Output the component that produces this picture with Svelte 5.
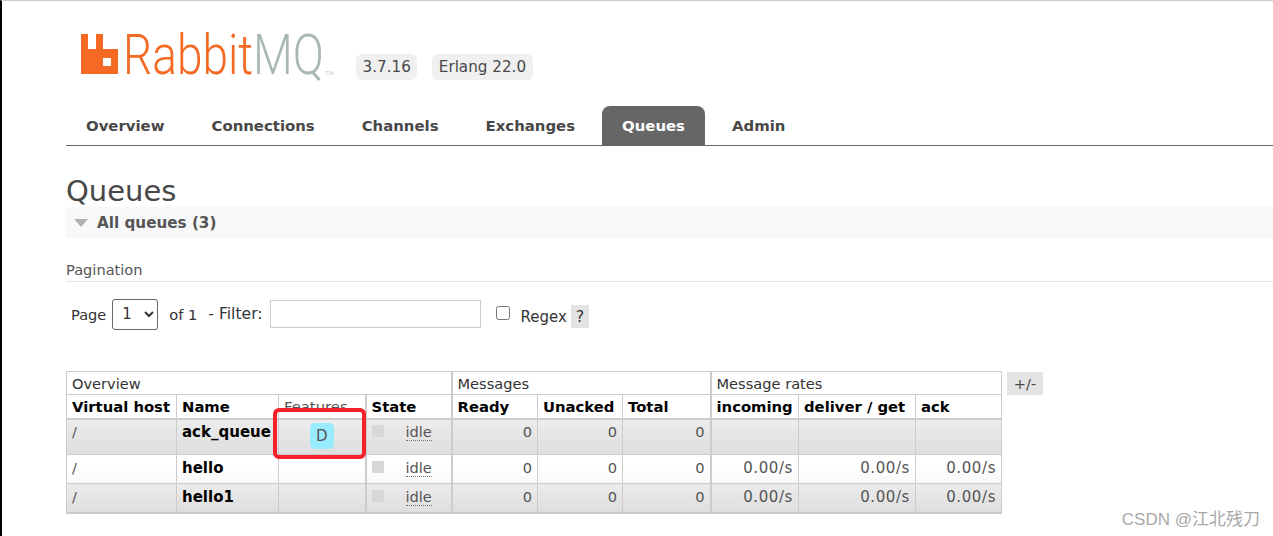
<script lang="ts">
  const NAV = ['Overview', 'Connections', 'Channels', 'Exchanges', 'Queues', 'Admin'];
  const ACTIVE = 'Queues';

  const QUEUES = [
    { name: 'ack_queue', durable: true, rates: ['', '', ''], tall: true },
    { name: 'hello', durable: false, rates: ['0.00/s', '0.00/s', '0.00/s'], tall: false },
    { name: 'hello1', durable: false, rates: ['0.00/s', '0.00/s', '0.00/s'], tall: false },
  ];
</script>

<div class="page">
  <header class="top">
    <svg class="logo" viewBox="0 0 270 56" width="270" height="56" aria-label="RabbitMQ">
      <path
        fill="#f46a25"
        fill-rule="evenodd"
        d="M1 7H8V22H16V7H23V22H38V47H1Z M23 31V39H31V31Z"
      />
      <text class="logo-word" x="43" y="47" textLength="201" lengthAdjust="spacingAndGlyphs"><tspan class="logo-a">Rabbit</tspan><tspan class="logo-b">MQ</tspan></text>
      <text class="logo-tm" x="245" y="48">TM</text>
    </svg>
    <span class="pill first">3.7.16</span>
    <span class="pill">Erlang 22.0</span>
  </header>

  <nav class="tabs">
    {#each NAV as item}
      <a class="tab" class:active={item === ACTIVE} href="#/">{item}</a>
    {/each}
  </nav>

  <h1>Queues</h1>
  <div class="section-head">
    <span class="arrow"></span>
    <span>All queues (3)</span>
  </div>

  <h3>Pagination</h3>
  <div class="filter">
    <span class="lbl-page">Page</span>
    <select class="page-select"><option>1</option></select>
    <span class="of">of 1</span>
    <span class="lbl-filter">- Filter:</span>
    <input class="filter-input" type="text" />
    <input class="regex" type="checkbox" />
    <span class="lbl-regex">Regex</span>
    <span class="help">?</span>
  </div>

  <div class="table-row">
    <table>
      <colgroup>
        <col style="width:110px" /><col style="width:102px" /><col style="width:87px" /><col style="width:86px" />
        <col style="width:86px" /><col style="width:85px" /><col style="width:88px" />
        <col style="width:88px" /><col style="width:117px" /><col style="width:86px" />
      </colgroup>
      <thead>
        <tr class="groups">
          <th colspan="4" class="sep">Overview</th>
          <th colspan="3" class="sep">Messages</th>
          <th colspan="3">Message rates</th>
        </tr>
        <tr class="cols">
          <th>Virtual host</th>
          <th>Name</th>
          <th class="faded sep">Features</th>
          <th class="sep">State</th>
          <th>Ready</th>
          <th>Unacked</th>
          <th class="sep">Total</th>
          <th>incoming</th>
          <th>deliver / get</th>
          <th>ack</th>
        </tr>
      </thead>
      <tbody>
        {#each QUEUES as q, i}
          <tr class:alt={i !== 1} class:tall={q.tall}>
            <td>/</td>
            <td class="name">{q.name}</td>
            <td class="features sep">
              {#if q.durable}<abbr class="tag">D</abbr>{/if}
            </td>
            <td class="state sep"><span class="box"></span><abbr class="idle">idle</abbr></td>
            <td class="num">0</td>
            <td class="num">0</td>
            <td class="num sep">0</td>
            {#each q.rates as r}
              <td class="num rate">{r}</td>
            {/each}
          </tr>
        {/each}
      </tbody>
    </table>
    <span class="plus">+/-</span>
  </div>

  <div class="mark"></div>
  <div class="watermark">CSDN @江北残刀</div>
</div>

<style>
  :global(body) {
    margin: 0;
    background: #fff;
  }

  .page {
    position: relative;
    box-sizing: border-box;
    height: 536px;
    overflow: hidden;
    padding-left: 64px;
    border-top: 1px solid #ccc;
    border-left: 2px solid #000;
    font-family: Verdana, "DejaVu Sans", sans-serif;
    font-size: 14.6px;
    color: #484848;
  }

  .top {
    display: flex;
    align-items: flex-start;
    height: 105px;
    padding-left: 14px;
  }

  .logo {
    margin-top: 26px;
    flex-shrink: 0;
  }

  .logo-word {
    font-family: Roboto, "Liberation Sans", sans-serif;
    font-weight: 300;
    font-size: 55px;
  }

  .logo-a {
    fill: #f46a25;
  }

  .logo-b {
    fill: #a9b8b2;
  }

  .logo-tm {
    font-family: "Liberation Sans", sans-serif;
    font-size: 6px;
    fill: #c4ccc8;
  }

  .pill {
    margin-top: 53px;
    padding: 0 6.5px;
    height: 26px;
    line-height: 27px;
    border-radius: 6px;
    background: #f0f0f0;
    font-size: 15.2px;
    margin-left: 15px;
    white-space: nowrap;
  }

  .pill.first {
    margin-left: 6px;
  }

  .tabs {
    display: flex;
    height: 39px;
    border-bottom: 1px solid #666;
  }

  .tab {
    display: block;
    height: 39px;
    line-height: 40px;
    padding: 0 20px;
    margin-right: 7px;
    font-weight: bold;
    font-size: 14.9px;
    color: #484848;
    text-decoration: none;
    white-space: nowrap;
    border-radius: 8px 8px 0 0;
  }

  .tab.active {
    background: #666;
    color: #fff;
  }

  h1 {
    margin: 28px 0 0;
    padding-top: 2px;
    font-size: 29px;
    line-height: 31px;
    font-weight: normal;
    color: #484848;
  }

  .section-head {
    display: flex;
    align-items: center;
    height: 31px;
    background: #f8f8f8;
    font-weight: bold;
    font-size: 15.2px;
    color: #555;
  }

  .arrow {
    width: 0;
    height: 0;
    margin: 1px 9px 0 8px;
    border-left: 7px solid transparent;
    border-right: 7px solid transparent;
    border-top: 8px solid #b0b0b0;
  }

  h3 {
    margin: 22px 0 0;
    height: 21px;
    font-size: 14.6px;
    line-height: 20px;
    font-weight: normal;
    color: #555;
    border-bottom: 1px solid #e4e4e4;
  }

  .filter {
    display: flex;
    align-items: center;
    height: 34px;
    margin-top: 15px;
    padding-left: 5px;
    color: #333;
  }

  .page-select {
    width: 46px;
    height: 31px;
    margin-left: 6px;
    font: 15px Verdana, "DejaVu Sans", sans-serif;
    color: #333;
    background: #fff;
    border: 1px solid #666;
    border-radius: 3px;
    padding-left: 5px;
  }

  .of {
    margin-left: 11px;
  }

  .lbl-filter {
    margin-left: 11px;
    font-size: 15.6px;
  }

  .filter-input {
    box-sizing: border-box;
    width: 211px;
    height: 28px;
    margin: 0 0 0 7px;
    border: 1px solid #ccc;
  }

  .regex {
    width: 14px;
    height: 14px;
    margin: -3px 0 0 15px;
  }

  .lbl-regex {
    margin: 5px 0 0 11px;
    font-size: 15px;
  }

  .help {
    width: 18px;
    height: 23px;
    line-height: 23px;
    margin: 5px 0 0 4px;
    text-align: center;
    font-size: 16px;
    background: #e4e4e4;
  }

  .table-row {
    display: flex;
    align-items: flex-start;
    margin-top: 40px;
  }

  table {
    table-layout: fixed;
    width: 935px;
    border-collapse: collapse;
    border: 1px solid #ccc;
    border-bottom-width: 2px;
    font-size: 14.6px;
  }

  th,
  td {
    box-sizing: border-box;
    padding: 0 5px;
    border: 1px solid #ccc;
    white-space: nowrap;
    overflow: visible;
    text-align: left;
  }

  th {
    color: #000;
  }

  .groups th {
    height: 23px;
    font-weight: normal;
    color: #333;
  }

  .cols th {
    height: 24px;
    font-weight: bold;
    font-size: 14.8px;
    border-bottom: 2px solid #ccc;
  }

  .cols th.faded {
    font-weight: normal;
    color: #555;
  }

  .sep {
    border-right-width: 2px;
  }

  td {
    height: 29px;
    background: linear-gradient(#fff 40%, #f8f8f8);
    color: #555;
    vertical-align: top;
    padding-top: 4px;
    line-height: 18px;
  }

  tr.tall td {
    height: 36px;
    padding-top: 3px;
  }

  tr.alt td {
    background: linear-gradient(#ececec, #dedede);
  }

  .name {
    font-weight: bold;
    font-size: 15px;
    color: #000;
  }

  .rate {
    font-size: 15px;
    letter-spacing: 0.6px;
  }

  .tag {
    display: inline-block;
    width: 24px;
    height: 26px;
    line-height: 26px;
    border-radius: 5px;
    background: #99ebff;
    text-decoration: none;
    text-align: center;
    font-size: 15px;
    color: #555;
  }

  .features {
    text-align: center;
  }

  .box {
    display: inline-block;
    width: 12px;
    height: 12px;
    background: #d8d8d8;
    vertical-align: 0;
  }

  .idle {
    margin-left: 22px;
    color: #555;
    text-decoration: none;
    border-bottom: 1px dotted #777;
  }

  .num {
    text-align: right;
  }

  .plus {
    width: 36px;
    height: 23px;
    line-height: 23px;
    margin: 1px 0 0 5px;
    text-align: center;
    background: #e4e4e4;
  }

  /* annotation painted over the screenshot */
  .mark {
    position: absolute;
    left: 271px;
    top: 407px;
    width: 85px;
    height: 43px;
    border: 4px solid #f5202a;
    border-radius: 6px;
  }

  .watermark {
    position: absolute;
    right: 13px;
    bottom: 6px;
    font-family: "Liberation Sans", "Noto Sans CJK SC", sans-serif;
    font-size: 17px;
    color: #a8a8a8;
  }
</style>
